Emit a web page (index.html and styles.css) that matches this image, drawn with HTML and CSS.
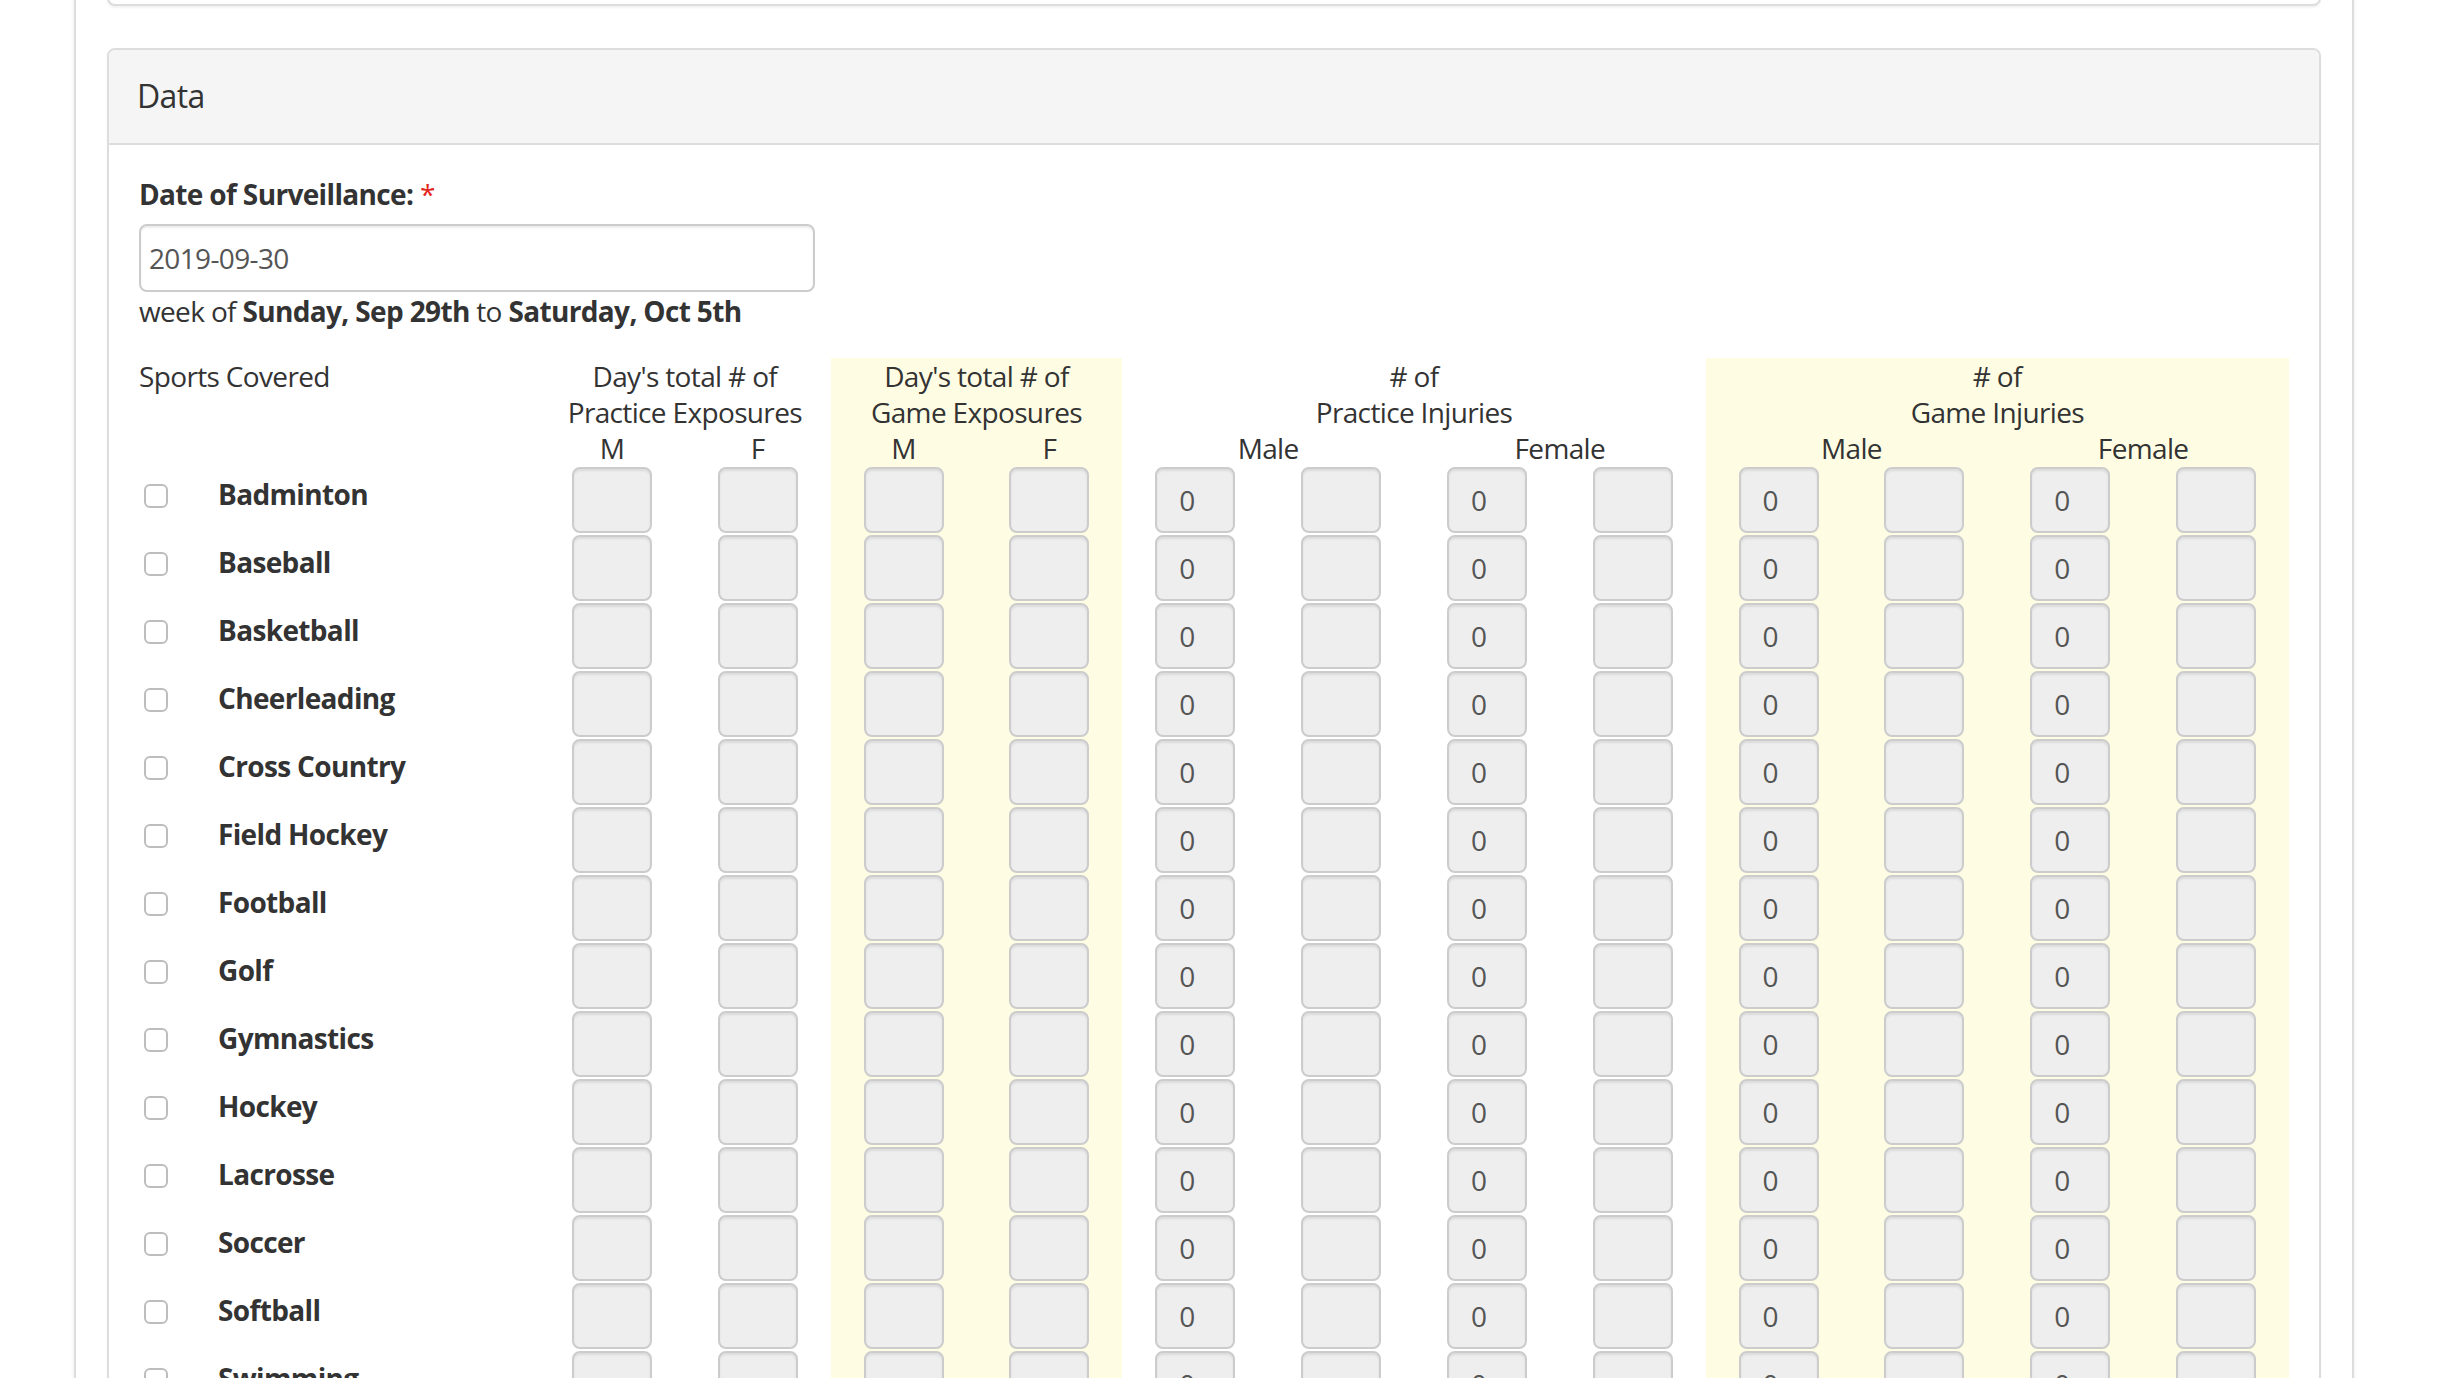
FILE: index.html
```html
<!DOCTYPE html>
<html>
<head>
  <meta charset="UTF-8" />
  <title>Weekly Surveillance</title>
  <link rel="stylesheet" href="styles.css">
</head>
<body>
  <div class="page">
    <div class="panel top-panel"></div>

    <div class="panel">
      <div class="panel-heading">Data</div>
      <div class="panel-body">
        <div class="form-group">
          <label class="field-label" for="surveillanceDate">Date of Surveillance: <span class="required">*</span></label>
          <input class="date-input" id="surveillanceDate" type="text" value="2019-09-30">
          <div class="week-note">week of <b>Sunday, Sep 29th</b> to <b>Saturday, Oct 5th</b></div>
        </div>

        <table class="sports-table">
          <colgroup>
            <col class="col-sport">
            <col span="12" class="col-num">
          </colgroup>
          <thead>
            <tr class="head-top">
              <th class="sport-head">Sports Covered</th>
              <th colspan="2">Day's total # of<br>Practice Exposures</th>
              <th colspan="2" class="hl">Day's total # of<br>Game Exposures</th>
              <th colspan="4"># of<br>Practice Injuries</th>
              <th colspan="4" class="hl"># of<br>Game Injuries</th>
            </tr>
            <tr class="head-sub">
              <th></th>
              <th>M</th>
              <th>F</th>
              <th class="hl">M</th>
              <th class="hl">F</th>
              <th colspan="2">Male</th>
              <th colspan="2">Female</th>
              <th colspan="2" class="hl">Male</th>
              <th colspan="2" class="hl">Female</th>
            </tr>
          </thead>
          <tbody id="sportRows"></tbody>
        </table>
      </div>
    </div>
  </div>

  <script>
    const sports = [
      "Badminton", "Baseball", "Basketball", "Cheerleading", "Cross Country",
      "Field Hockey", "Football", "Golf", "Gymnastics", "Hockey", "Lacrosse",
      "Soccer", "Softball", "Swimming", "Tennis", "Track & Field", "Volleyball", "Wrestling"
    ];

    // columns 3-4 and 9-12 are the game columns (highlighted)
    const highlighted = [3, 4, 9, 10, 11, 12];
    const zeroCols = [5, 7, 9, 11];

    function buildRows() {
      const body = document.getElementById("sportRows");
      sports.forEach(name => {
        const row = document.createElement("tr");

        const sportCell = document.createElement("td");
        sportCell.className = "sport-cell";
        sportCell.innerHTML = `<label class="sport-label"><input type="checkbox" class="sport-check"><span>${name}</span></label>`;
        row.appendChild(sportCell);

        for (let col = 1; col <= 12; col++) {
          const cell = document.createElement("td");
          if (highlighted.includes(col)) cell.className = "hl";
          const input = document.createElement("input");
          input.type = "text";
          input.readOnly = true;
          input.className = "count-input";
          if (zeroCols.includes(col)) input.value = "0";
          cell.appendChild(input);
          row.appendChild(cell);
        }
        body.appendChild(row);
      });
    }

    buildRows();
  </script>
</body>
</html>
```

FILE: styles.css
```css
* {
  box-sizing: border-box;
}

html,
body {
  margin: 0;
  height: 100%;
  overflow: hidden;
}

body {
  background: #fff;
  color: #333;
  font-family: 'Open Sans', sans-serif;
  font-size: 28px;
  line-height: 40px;
  letter-spacing: -0.65px;
}

.page {
  width: 2280px;
  min-height: 100%;
  margin-left: 74px;
  padding: 0 31px;
  border-left: 2px solid #ddd;
  border-right: 2px solid #ddd;
  box-shadow: 0 0 4px rgba(0, 0, 0, 0.08);
}

.panel {
  background: #fff;
  border: 2px solid #ddd;
  border-radius: 8px;
  box-shadow: 0 2px 2px rgba(0, 0, 0, 0.05);
  margin-bottom: 42px;
}

.top-panel {
  height: 46px;
  margin-top: -40px;
}

.panel-heading {
  background: #f5f5f5;
  border-bottom: 2px solid #ddd;
  border-radius: 6px 6px 0 0;
  padding: 28px 28px 29px;
  font-size: 32px;
  line-height: 36px;
}

.panel-body {
  padding: 29px 30px 30px;
}

.form-group {
  margin-bottom: 27px;
}

.field-label {
  display: block;
  font-weight: bold;
  margin-bottom: 10px;
}

.required {
  color: #e3261c;
  font-weight: normal;
}

.date-input {
  display: block;
  width: 676px;
  height: 68px;
  padding: 0 8px;
  border: 2px solid #ccc;
  border-radius: 8px;
  font-family: 'Open Sans', sans-serif;
  font-size: 28px;
  letter-spacing: -0.65px;
  color: #555;
  background: #fff;
  box-shadow: inset 0 2px 2px rgba(0, 0, 0, 0.075);
}

.week-note {
  margin-top: -1px;
}

.week-note b {
  font-weight: bold;
}

.sports-table {
  width: 2150px;
  table-layout: fixed;
  border-collapse: collapse;
}

.col-sport {
  width: 400px;
}

.sports-table th {
  font-weight: normal;
  text-align: center;
  line-height: 36px;
  padding: 0;
  vertical-align: top;
}

.sports-table th.sport-head {
  text-align: left;
}

.head-sub th {
  height: 34px;
}

.hl {
  background: #fefde4;
}

.sports-table td {
  padding: 1px 0;
  text-align: center;
  vertical-align: top;
}

.sports-table td.sport-cell {
  text-align: left;
  padding-top: 8px;
}

.sport-label {
  display: flex;
  align-items: center;
  font-weight: bold;
  height: 40px;
}

.sport-check {
  appearance: none;
  -webkit-appearance: none;
  width: 24px;
  height: 24px;
  margin: 4px 50px 0 5px;
  border: 2px solid #bdbdbd;
  border-radius: 6px;
  background: #fff;
  flex: none;
}

.count-input {
  display: block;
  width: 80px;
  height: 66px;
  margin: 0 auto;
  padding: 0 22px;
  border: 2px solid #ccc;
  border-radius: 8px;
  background: #eee;
  font-family: 'Open Sans', sans-serif;
  font-size: 28px;
  color: #555;
  box-shadow: inset 0 2px 2px rgba(0, 0, 0, 0.075);
}
```
